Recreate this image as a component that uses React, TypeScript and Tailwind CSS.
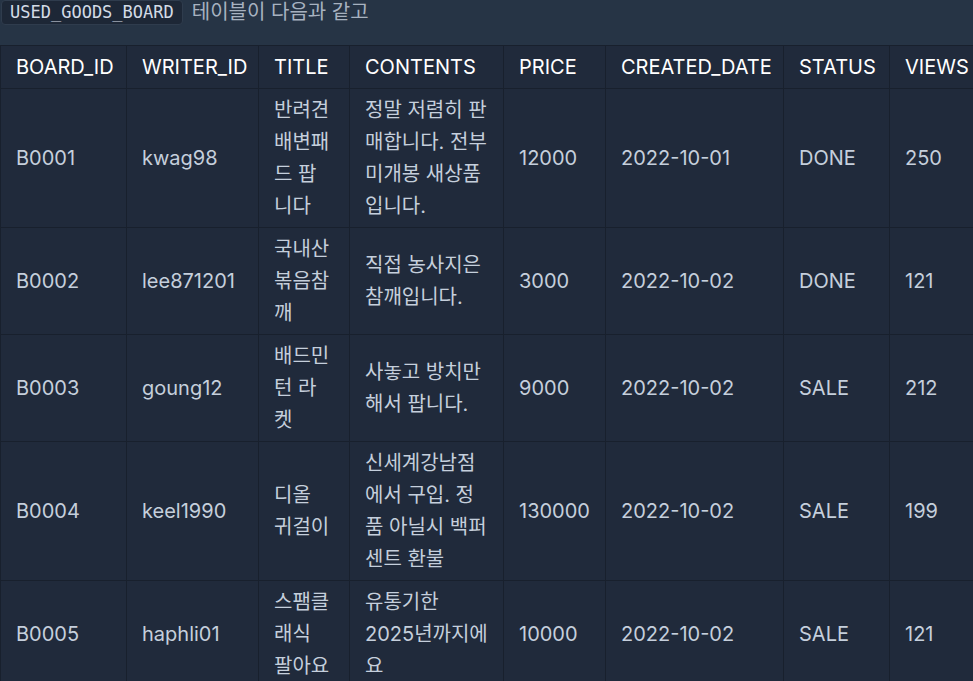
import React from "react";

const cols = [126, 132, 91, 154, 102, 178, 106, 94];
const headers = ["BOARD_ID", "WRITER_ID", "TITLE", "CONTENTS", "PRICE", "CREATED_DATE", "STATUS", "VIEWS"];
const rows = [
  ["B0001", "kwag98", "반려견 배변패드 팝니다", "정말 저렴히 판매합니다. 전부 미개봉 새상품입니다.", "12000", "2022-10-01", "DONE", "250"],
  ["B0002", "lee871201", "국내산 볶음참깨", "직접 농사지은 참깨입니다.", "3000", "2022-10-02", "DONE", "121"],
  ["B0003", "goung12", "배드민턴 라켓", "사놓고 방치만 해서 팝니다.", "9000", "2022-10-02", "SALE", "212"],
  ["B0004", "keel1990", "디올 귀걸이", "신세계강남점에서 구입. 정품 아닐시 백퍼센트 환불", "130000", "2022-10-02", "SALE", "199"],
  ["B0005", "haphli01", "스팸클래식 팔아요", "유통기한 2025년까지에요", "10000", "2022-10-02", "SALE", "121"],
];

export default function App() {
  return (
    <div
      className="w-[973px] h-[681px] overflow-hidden bg-[#263445]"
      style={{ fontFamily: "Inter, 'Noto Sans CJK KR', sans-serif" }}
    >
      <div className="flex items-start h-[45px]">
        <span
          className="ml-[1px] h-[25px] px-[8px] flex items-center rounded-[4px] border border-[#2f3c4d] bg-[#1d2736] text-[17px] text-[#d3dbe6]"
          style={{ fontFamily: "'DejaVu Sans Mono', 'Liberation Mono', monospace" }}
        >
          USED_GOODS_BOARD
        </span>
        <span className="ml-[9px] text-[20px] leading-[25px] text-[#a7b2c0]">테이블이 다음과 같고</span>
      </div>
      <table className="table-fixed border-collapse w-[983px] bg-[#202a3b] text-[20px] leading-[32px]">
        <colgroup>
          {cols.map((w, i) => (
            <col key={i} style={{ width: w }} />
          ))}
        </colgroup>
        <thead>
          <tr>
            {headers.map((h) => (
              <th
                key={h}
                className="border border-[#18202d] pl-[15px] pr-[16px] py-[5px] text-left font-normal text-white align-middle"
              >
                {h}
              </th>
            ))}
          </tr>
        </thead>
        <tbody>
          {rows.map((r) => (
            <tr key={r[0]}>
              {r.map((c, i) => (
                <td
                  key={i}
                  className={
                    i === 3
                      ? "border border-[#18202d] pl-[15px] pr-[14px] py-[5px] text-left align-middle text-[#c5cfdc]"
                      : "border border-[#18202d] pl-[15px] pr-[16px] py-[5px] text-left align-middle text-[#c5cfdc]"
                  }
                >
                  {c}
                </td>
              ))}
            </tr>
          ))}
        </tbody>
      </table>
    </div>
  );
}
